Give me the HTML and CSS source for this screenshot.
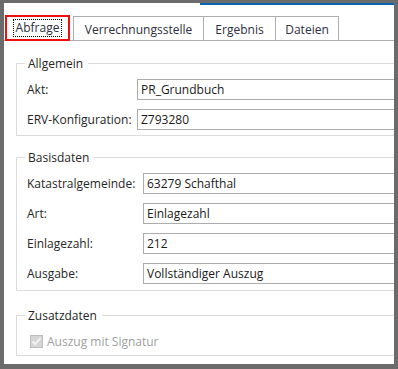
FILE: index.html
```html
<!DOCTYPE html>
<html lang="de">
<head>
<meta charset="utf-8">
<title>Abfrage</title>
<link rel="stylesheet" href="styles.css">
</head>
<body>
<div class="window">
  <div class="accent"></div>
  <div class="tabs">
    <div class="tab tab-active"><span class="focus">Abfrage</span></div>
    <div class="tab tab-v">Verrechnungsstelle</div>
    <div class="tab tab-e">Ergebnis</div>
    <div class="tab tab-d">Dateien</div>
  </div>
  <div class="panel">
    <fieldset class="group group-a">
      <legend>Allgemein</legend>
      <div class="form form-a">
        <span class="label">Akt:</span><div class="field">PR_Grundbuch</div>
        <span class="label">ERV-Konfiguration:</span><div class="field">Z793280</div>
      </div>
    </fieldset>
    <fieldset class="group group-b">
      <legend>Basisdaten</legend>
      <div class="form form-b">
        <span class="label">Katastralgemeinde:</span><div class="field">63279 Schafthal</div>
        <span class="label">Art:</span><div class="field">Einlagezahl</div>
        <span class="label">Einlagezahl:</span><div class="field">212</div>
        <span class="label">Ausgabe:</span><div class="field">Vollständiger Auszug</div>
      </div>
    </fieldset>
    <fieldset class="group group-c">
      <legend>Zusatzdaten</legend>
      <div class="check-row">
        <span class="checkbox"><svg width="11" height="11" viewBox="0 0 11 11"><path d="M1.5 5.5 L4.2 8.2 L9.5 2.2" fill="none" stroke="#f4f4f4" stroke-width="1.8"/></svg></span>
        <span class="check-label">Auszug mit Signatur</span>
      </div>
    </fieldset>
  </div>
</div>
</body>
</html>
```
FILE: styles.css
```css
html, body {
  margin: 0;
  padding: 0;
}
body {
  width: 398px;
  height: 369px;
  overflow: hidden;
  font-family: "Open Sans", "Noto Sans", sans-serif;
  font-size: 12px;
  color: #262626;
}
.window {
  box-sizing: border-box;
  width: 398px;
  height: 369px;
  border-style: solid;
  border-color: #6b6b6b;
  border-width: 3px 4px 5px 4px;
  background: #fff;
  overflow: hidden;
}
.accent {
  height: 2px;
  margin-left: 196px;
  background: #0a64b4;
}
.tabs {
  display: flex;
  align-items: flex-end;
  height: 35px;
  border-bottom: 1px solid #adadad;
  padding-left: 1px;
}
.tab {
  box-sizing: border-box;
  height: 24px;
  border: 1px solid #adadad;
  border-bottom: none;
  display: flex;
  align-items: center;
  justify-content: center;
  padding-top: 1px;
  color: #2e2e40;
  background: #fff;
}
.tab-active {
  position: relative;
  z-index: 1;
  width: 65px;
  height: 26px;
  margin-bottom: -1px;
  border: 2px solid #ee1010;
  padding-top: 0;
}
.focus {
  display: inline-block;
  line-height: 16px;
  padding: 0 2px;
  outline: 1px dotted #000;
}
.tab-v {
  width: 131px;
  margin-left: 3px;
}
.tab-e {
  width: 72px;
  border-left: none;
}
.tab-d {
  width: 63px;
  border-left: none;
}
.panel {
  padding: 15px 0 0 12px;
}
.group {
  margin: 0;
  width: 420px;
  border: 1px solid #dcdcdc;
  padding: 8px 0 5px 10px;
  min-inline-size: 0;
}
.group legend {
  padding: 0 5px 0 3px;
  margin-left: -2px;
  line-height: 15px;
  color: #262626;
}
.group-b {
  margin-top: 14px;
  padding-bottom: 6px;
}
.group-c {
  margin-top: 17px;
  padding-top: 12px;
  padding-bottom: 7px;
}
.form {
  display: grid;
  row-gap: 9px;
  align-items: center;
}
.form-a {
  grid-template-columns: 110px 1fr;
}
.form-b {
  grid-template-columns: 116px 1fr;
}
.label {
  white-space: nowrap;
  color: #262626;
}
.field {
  box-sizing: border-box;
  height: 21px;
  border: 1px solid #acacac;
  padding: 0 3px;
  line-height: 19px;
  color: #1a1a1a;
  white-space: nowrap;
}
.check-row {
  display: flex;
  align-items: center;
  height: 13px;
  padding-left: 3px;
}
.checkbox {
  box-sizing: border-box;
  width: 13px;
  height: 13px;
  border: 1px solid #bdbdbd;
  background: #d6d6d6;
  display: flex;
  align-items: center;
  justify-content: center;
}
.check-label {
  margin-left: 4px;
  color: #a0a0a0;
}
```
